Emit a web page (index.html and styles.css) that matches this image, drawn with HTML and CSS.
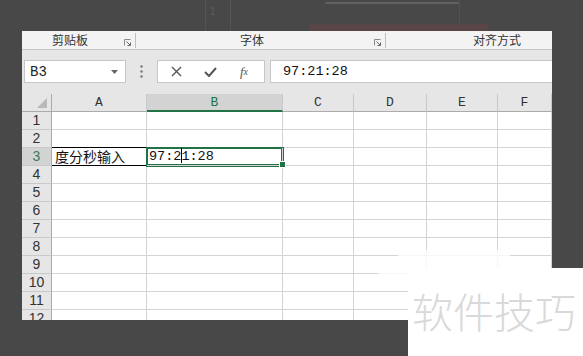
FILE: index.html
```html
<!DOCTYPE html>
<html lang="zh-CN">
<head>
    <meta charset="UTF-8">
    <title>度分秒输入</title>
    <link rel="stylesheet" href="styles.css">
</head>
<body>
    <div class="backdrop">
        <div class="ghost ghost-v1"></div>
        <div class="ghost ghost-v2"></div>
        <div class="ghost ghost-v3"></div>
        <div class="ghost ghost-h"></div>
        <div class="ghost ghost-bar"></div>
        <div class="ghost ghost-num">1</div>
    </div>

    <div class="window">
        <div class="ribbon">
            <div class="group group-clip">
                <span>剪贴板</span>
                <svg class="launcher" width="7" height="7" viewBox="0 0 7 7"><path d="M0.5 6.5V0.5H6.5" fill="none" stroke="#8a8a8a"/><path d="M2.5 2.5L6 6M3.5 6.5H6.5V3.5" fill="none" stroke="#666"/></svg>
            </div>
            <div class="sep"></div>
            <div class="group group-font">
                <span>字体</span>
                <svg class="launcher" width="7" height="7" viewBox="0 0 7 7"><path d="M0.5 6.5V0.5H6.5" fill="none" stroke="#8a8a8a"/><path d="M2.5 2.5L6 6M3.5 6.5H6.5V3.5" fill="none" stroke="#666"/></svg>
            </div>
            <div class="sep"></div>
            <div class="group group-align">
                <span>对齐方式</span>
            </div>
        </div>

        <div class="formula-band">
            <div class="name-box">
                <span>B3</span>
                <svg class="drop" width="7" height="4" viewBox="0 0 7 4"><path d="M0 0H7L3.5 4Z" fill="#666"/></svg>
            </div>
            <svg class="grip" width="3" height="13" viewBox="0 0 3 13"><circle cx="1.5" cy="1.5" r="1.2" fill="#777"/><circle cx="1.5" cy="6.5" r="1.2" fill="#777"/><circle cx="1.5" cy="11.5" r="1.2" fill="#777"/></svg>
            <div class="fx-box">
                <span class="fx-btn">
                    <svg width="11" height="11" viewBox="0 0 11 11"><path d="M1 1L10 10M10 1L1 10" stroke="#555" stroke-width="1.4"/></svg>
                </span>
                <span class="fx-btn">
                    <svg width="13" height="10" viewBox="0 0 13 10"><path d="M1 5L5 9L12 1" fill="none" stroke="#555" stroke-width="2"/></svg>
                </span>
                <span class="fx-btn fx-text">f<sub>x</sub></span>
            </div>
            <div class="formula-input">97:21:28</div>
        </div>

        <div class="sheet">
            <div class="cell corner"><svg width="10" height="10" viewBox="0 0 10 10"><path d="M10 0V10H0Z" fill="#b9b9b9"/></svg></div>
            <div class="cell col-head">A</div>
            <div class="cell col-head sel">B</div>
            <div class="cell col-head">C</div>
            <div class="cell col-head">D</div>
            <div class="cell col-head">E</div>
            <div class="cell col-head">F</div>

            <div class="cell row-head">1</div>
            <div class="cell"></div><div class="cell"></div><div class="cell"></div><div class="cell"></div><div class="cell"></div><div class="cell"></div>

            <div class="cell row-head">2</div>
            <div class="cell"></div><div class="cell"></div><div class="cell"></div><div class="cell"></div><div class="cell"></div><div class="cell"></div>

            <div class="cell row-head sel">3</div>
            <div class="cell boxed">度分秒输入</div>
            <div class="cell active">97:2<span class="caret"></span>1:28</div>
            <div class="cell"></div><div class="cell"></div><div class="cell"></div><div class="cell"></div>

            <div class="cell row-head">4</div>
            <div class="cell"></div><div class="cell"></div><div class="cell"></div><div class="cell"></div><div class="cell"></div><div class="cell"></div>

            <div class="cell row-head">5</div>
            <div class="cell"></div><div class="cell"></div><div class="cell"></div><div class="cell"></div><div class="cell"></div><div class="cell"></div>

            <div class="cell row-head">6</div>
            <div class="cell"></div><div class="cell"></div><div class="cell"></div><div class="cell"></div><div class="cell"></div><div class="cell"></div>

            <div class="cell row-head">7</div>
            <div class="cell"></div><div class="cell"></div><div class="cell"></div><div class="cell"></div><div class="cell"></div><div class="cell"></div>

            <div class="cell row-head">8</div>
            <div class="cell"></div><div class="cell"></div><div class="cell"></div><div class="cell"></div><div class="cell"></div><div class="cell"></div>

            <div class="cell row-head">9</div>
            <div class="cell"></div><div class="cell"></div><div class="cell"></div><div class="cell"></div><div class="cell"></div><div class="cell"></div>

            <div class="cell row-head">10</div>
            <div class="cell"></div><div class="cell"></div><div class="cell"></div><div class="cell"></div><div class="cell"></div><div class="cell"></div>

            <div class="cell row-head">11</div>
            <div class="cell"></div><div class="cell"></div><div class="cell"></div><div class="cell"></div><div class="cell"></div><div class="cell"></div>

            <div class="cell row-head">12</div>
            <div class="cell"></div><div class="cell"></div><div class="cell"></div><div class="cell"></div><div class="cell"></div><div class="cell"></div>
        </div>
    </div>

    <div class="smudge smudge-top"></div>
    <div class="smudge smudge-left"></div>
    <div class="watermark">软件技巧</div>
</body>
</html>
```

FILE: styles.css
```css
body {
    margin: 0;
    width: 583px;
    height: 356px;
    overflow: hidden;
    position: relative;
    background-color: #484848;
    font-family: 'Noto Sans CJK SC', sans-serif;
}

/* blurred window behind */
.backdrop {
    height: 31px;
    position: relative;
}
.ghost {
    position: absolute;
}
.ghost-v1 {
    left: 205px;
    top: 0;
    width: 1px;
    height: 31px;
    background-color: #545454;
}
.ghost-v2 {
    left: 230px;
    top: 0;
    width: 1px;
    height: 31px;
    background-color: #555;
}
.ghost-v3 {
    left: 459px;
    top: 0;
    width: 1px;
    height: 31px;
    background-color: #525252;
}
.ghost-h {
    left: 325px;
    top: 2px;
    width: 134px;
    height: 2px;
    background-color: #606060;
}
.ghost-bar {
    left: 310px;
    top: 24px;
    width: 178px;
    height: 7px;
    background-color: #5a4646;
}
.ghost-num {
    left: 210px;
    top: 6px;
    font-family: 'Liberation Sans', sans-serif;
    font-size: 10px;
    color: #5e5e5e;
}

.window {
    margin-left: 22px;
    width: 530px;
    height: 289px;
    background-color: #fff;
    overflow: hidden;
}

.ribbon {
    display: flex;
    align-items: center;
    height: 18px;
    background-color: #f3f3f3;
    border-bottom: 1px solid #c6c6c6;
    font-size: 12px;
    line-height: 18px;
    color: #333;
}
.group {
    display: flex;
    align-items: center;
    height: 18px;
    box-sizing: border-box;
}
.group-clip {
    width: 113px;
    padding-left: 30px;
}
.group-font {
    width: 249px;
    padding-left: 104px;
}
.group-align {
    flex: 1;
    padding-left: 87px;
}
.launcher {
    margin-left: auto;
    margin-right: 4px;
    margin-top: 5px;
}
.sep {
    width: 1px;
    height: 15px;
    background-color: #c0c0c0;
}

.formula-band {
    display: flex;
    align-items: flex-start;
    height: 44px;
    box-sizing: border-box;
    padding: 10px 0 0 2px;
    background-color: #e6e6e6;
}
.name-box {
    display: flex;
    align-items: center;
    width: 102px;
    height: 23px;
    box-sizing: border-box;
    padding-left: 5px;
    border: 1px solid #c6c6c6;
    background-color: #fff;
    font-family: 'Liberation Mono', monospace;
    font-size: 14px;
    color: #222;
}
.drop {
    margin-left: auto;
    margin-right: 7px;
}
.grip {
    margin: 5px 14px 0 14px;
}
.fx-box {
    display: flex;
    width: 108px;
    height: 23px;
    box-sizing: border-box;
    padding-left: 1px;
    border: 1px solid #c6c6c6;
    background-color: #fff;
}
.fx-btn {
    display: flex;
    align-items: center;
    justify-content: center;
    width: 34px;
    height: 21px;
}
.fx-text {
    font-family: 'Liberation Serif', serif;
    font-style: italic;
    font-size: 13px;
    color: #555;
}
.fx-text sub {
    font-size: 10px;
    vertical-align: -1px;
}
.formula-input {
    flex: 1;
    height: 23px;
    box-sizing: border-box;
    margin-left: 5px;
    padding-left: 12px;
    border: 1px solid #c6c6c6;
    border-right: 0;
    background-color: #fff;
    font-family: 'Liberation Mono', monospace;
    font-size: 13.5px;
    line-height: 21px;
    color: #111;
}

.sheet {
    display: grid;
    grid-template-columns: 30px 95px 136px 71px 73px 71px 54px;
    grid-auto-rows: 18px;
}
.cell {
    box-sizing: border-box;
    border-right: 1px solid #d4d4d4;
    border-bottom: 1px solid #d4d4d4;
    font-size: 14px;
    line-height: 17px;
    color: #111;
    white-space: nowrap;
}
.corner {
    display: flex;
    align-items: flex-end;
    justify-content: flex-end;
    padding: 0 4px 3px 0;
    background-color: #e6e6e6;
    border-right-color: #ababab;
    border-bottom-color: #ababab;
}
.col-head {
    background-color: #e6e6e6;
    border-right-color: #c9c9c9;
    border-bottom-color: #ababab;
    text-align: center;
    font-family: 'Liberation Mono', monospace;
    font-size: 13px;
    color: #333;
}
.col-head.sel {
    background-color: #d3d3d3;
    border-bottom: 2px solid #217346;
    color: #217346;
}
.row-head {
    background-color: #e6e6e6;
    border-right-color: #ababab;
    border-bottom-color: #c9c9c9;
    text-align: center;
    font-family: 'Liberation Sans', sans-serif;
    font-size: 14px;
    color: #333;
}
.row-head.sel {
    background-color: #d3d3d3;
    color: #3c7a5c;
}
.boxed {
    position: relative;
    padding-left: 3px;
    border-right-color: #000;
    border-bottom-color: #000;
    box-shadow: 0 -1px 0 #000;
}
.active {
    position: relative;
    z-index: 1;
    padding-left: 2px;
    font-family: 'Liberation Mono', monospace;
    font-size: 13.5px;
    box-shadow: 0 0 0 1px #217346, inset 0 0 0 1px #217346;
}
.active::after {
    content: '';
    position: absolute;
    right: -4px;
    bottom: -3px;
    width: 5px;
    height: 5px;
    background-color: #217346;
    border: 1px solid #fff;
}
.caret {
    display: inline-block;
    width: 0;
    height: 15px;
    margin-right: -1px;
    border-left: 1px solid #000;
    vertical-align: -3px;
}

/* watermark overlay */
.smudge {
    position: absolute;
    background-color: rgba(255, 255, 255, 0.8);
}
.smudge-top {
    left: 398px;
    top: 250px;
    width: 112px;
    height: 18px;
}
.smudge-left {
    left: 378px;
    top: 268px;
    width: 30px;
    height: 14px;
}
.watermark {
    position: absolute;
    left: 408px;
    top: 268px;
    right: 0;
    bottom: 0;
    box-sizing: border-box;
    padding: 14px 0 0 4px;
    background-color: #fff;
    font-family: 'Noto Sans CJK SC', sans-serif;
    font-size: 41px;
    font-weight: 300;
    line-height: 56px;
    color: #d9d9d9;
}
```
